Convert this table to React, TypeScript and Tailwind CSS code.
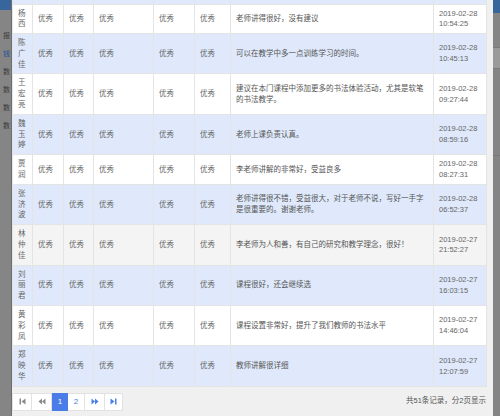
import React from "react";

type Row = {
  name: string;
  tone: "white" | "blue" | "gray";
  comment: string;
  date: string;
  time: string;
};

const rows: Row[] = [
  { name: "杨西", tone: "white", comment: "老师讲得很好，没有建议", date: "2019-02-28", time: "10:54:25" },
  { name: "陈广佳", tone: "blue", comment: "可以在教学中多一点训练学习的时间。", date: "2019-02-28", time: "10:45:13" },
  { name: "王宏亮", tone: "white", comment: "建议在本门课程中添加更多的书法体验活动，尤其是软笔的书法教学。", date: "2019-02-28", time: "09:27:44" },
  { name: "魏玉婷", tone: "blue", comment: "老师上课负责认真。", date: "2019-02-28", time: "08:59:16" },
  { name: "贾润", tone: "white", comment: "李老师讲解的非常好，受益良多", date: "2019-02-28", time: "08:27:31" },
  { name: "张济波", tone: "blue", comment: "老师讲得很不错，受益很大，对于老师不说，写好一手字是很重要的。谢谢老师。", date: "2019-02-28", time: "06:52:37" },
  { name: "林仲佳", tone: "gray", comment: "李老师为人和善，有自己的研究和教学理念，很好！", date: "2019-02-27", time: "21:52:27" },
  { name: "刘丽君", tone: "blue", comment: "课程很好，还会继续选", date: "2019-02-27", time: "16:03:15" },
  { name: "黄彩凤", tone: "white", comment: "课程设置非常好，提升了我们教师的书法水平", date: "2019-02-27", time: "14:46:04" },
  { name: "郑映华", tone: "blue", comment: "教师讲解很详细", date: "2019-02-27", time: "12:07:59" },
];

const toneBg = {
  white: "bg-white",
  blue: "bg-[#dfe9fb]",
  gray: "bg-[#f4f4f4]",
};

const cell = "border border-[#e4e4e4] pl-[5px] pr-[5px] pt-[4px] pb-[3px] align-middle";

const FirstIcon = () => (
  <svg width="7" height="7" viewBox="0 0 7 7" fill="#8a8a8a">
    <rect x="0.5" y="0.5" width="1.5" height="6" />
    <path d="M6.5 0.5v6L2.5 3.5z" />
  </svg>
);

const PrevIcon = () => (
  <svg width="8" height="7" viewBox="0 0 8 7" fill="#8a8a8a">
    <path d="M4 0.5v6L0.5 3.5z" />
    <path d="M7.5 0.5v6L4 3.5z" />
  </svg>
);

const NextIcon = () => (
  <svg width="8" height="7" viewBox="0 0 8 7" fill="#4a7de8">
    <path d="M0.5 0.5v6L4 3.5z" />
    <path d="M4 0.5v6L7.5 3.5z" />
  </svg>
);

const LastIcon = () => (
  <svg width="7" height="7" viewBox="0 0 7 7" fill="#4a7de8">
    <path d="M0.5 0.5v6L4.5 3.5z" />
    <rect x="5" y="0.5" width="1.5" height="6" />
  </svg>
);

export default function App() {
  return (
    <div
      className="w-[500px] h-[416px] flex overflow-hidden bg-[#f0f0f0] text-[7.5px] leading-[1.44] text-[#555]"
      style={{ fontFamily: '"Liberation Sans", "Noto Sans CJK SC", sans-serif' }}
    >
      {/* dimmed page behind, left side */}
      <div className="w-[12px] shrink-0 bg-[#858585] border-r border-[#6f6f6f] flex flex-col overflow-hidden">
        <div className="h-[10px] bg-[#36669c] shrink-0" />
        <div className="flex flex-col items-end pr-[1px] gap-[10px] pt-[22px] text-[7px] leading-[8px] text-[#3a3a3a] whitespace-nowrap">
          <span>报</span>
          <span className="text-[#1f4f9a]">钱</span>
          <span>数</span>
          <span>数</span>
          <span>数</span>
          <span>数</span>
        </div>
      </div>

      {/* dialog body */}
      <div className="flex-1 flex flex-col">
        <table className="w-[474px] table-fixed border-collapse">
          <colgroup>
            <col className="w-[20px]" />
            <col className="w-[31px]" />
            <col className="w-[30px]" />
            <col className="w-[60px]" />
            <col className="w-[41px]" />
            <col className="w-[36px]" />
            <col className="w-[203px]" />
            <col className="w-[53px]" />
          </colgroup>
          <thead>
            <tr className="h-[4px] bg-[#dfe9fb]">
              {Array.from({ length: 8 }).map((_, i) => (
                <th key={i} className="border-x border-[#e4e4e4] p-0 h-[4px]" />
              ))}
            </tr>
          </thead>
          <tbody>
            {rows.map((r) => (
              <tr key={r.name} className={toneBg[r.tone]}>
                <td className={`${cell} break-all text-[#666]`}>{r.name}</td>
                <td className={`${cell} text-[#666]`}>优秀</td>
                <td className={`${cell} text-[#666]`}>优秀</td>
                <td className={`${cell} text-[#666]`}>优秀</td>
                <td className={`${cell} text-[#666]`}>优秀</td>
                <td className={`${cell} text-[#666]`}>优秀</td>
                <td className={cell}>{r.comment}</td>
                <td className={`${cell} text-[#666]`}>
                  {r.date}
                  <br />
                  {r.time}
                </td>
              </tr>
            ))}
          </tbody>
        </table>

        {/* pager */}
        <div className="flex items-center justify-between w-[474px] mt-[6px]">
          <div className="flex h-[18px]">
            <button className="w-[20px] h-[18px] bg-white border border-[#e2e2e2] flex items-center justify-center">
              <FirstIcon />
            </button>
            <button className="w-[20px] h-[18px] bg-white border border-l-0 border-[#e2e2e2] flex items-center justify-center">
              <PrevIcon />
            </button>
            <button className="w-[16px] h-[18px] bg-[#4a7de8] border border-[#4a7de8] text-white text-[8px] flex items-center justify-center">
              1
            </button>
            <button className="w-[17px] h-[18px] bg-white border border-l-0 border-[#e2e2e2] text-[#4a7de8] text-[8px] flex items-center justify-center">
              2
            </button>
            <button className="w-[20px] h-[18px] bg-white border border-l-0 border-[#e2e2e2] flex items-center justify-center">
              <NextIcon />
            </button>
            <button className="w-[18px] h-[18px] bg-white border border-l-0 border-[#e2e2e2] flex items-center justify-center">
              <LastIcon />
            </button>
          </div>
          <span className="text-[#555]">共51条记录，分2页显示</span>
        </div>
      </div>

      {/* dimmed page behind, right side */}
      <div className="w-[7px] shrink-0 bg-[#858585] flex flex-col">
        <div className="h-[13px] bg-[#36669c]" />
        <div className="h-[34px]" />
        <div className="h-[22px] bg-[#9a9a9a] border-y border-[#7a7a7a]" />
        <div className="h-[86px]" />
        <div className="h-px bg-[#7a7a7a]" />
      </div>
    </div>
  );
}
